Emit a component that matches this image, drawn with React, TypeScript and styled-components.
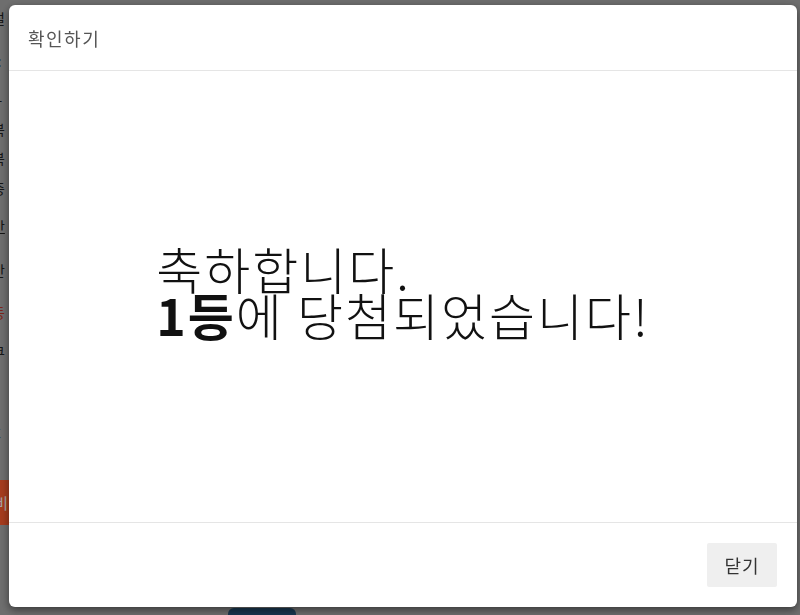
import React from 'react';
import styled, { createGlobalStyle } from 'styled-components';

const GlobalStyle = createGlobalStyle`
  html, body {
    margin: 0;
    padding: 0;
    width: 800px;
    height: 615px;
    overflow: hidden;
    background: #aaaaaa;
    font-family: "Noto Sans CJK KR", "Noto Sans", sans-serif;
  }
`;

const Page = styled.div`
  display: flex;
  flex-direction: column;
  height: 615px;
  padding-top: 2px;
  margin-left: -8px;
  box-sizing: border-box;
`;

const PageRow = styled.div<{ $h: number; $red?: boolean; $underline?: boolean }>`
  height: ${(p) => p.$h}px;
  display: flex;
  align-items: center;
  font-size: 14px;
  color: ${(p) => (p.$red ? '#c0392b' : '#222')};
  text-decoration: ${(p) => (p.$underline ? 'underline' : 'none')};
`;

const RedButton = styled.div`
  width: 80px;
  height: 45px;
  margin-top: 30px;
  margin-left: -64px;
  background: #ff5c2e;
  color: #fff;
  display: flex;
  align-items: center;
  justify-content: flex-end;
  padding-right: 4px;
  font-size: 15px;
`;

const BottomBar = styled.div`
  margin-top: auto;
  display: flex;
  padding-left: 236px;
  height: 7px;
`;

const BlueButton = styled.div`
  width: 68px;
  height: 20px;
  background: #26557b;
  border-radius: 6px 6px 0 0;
`;

const Backdrop = styled.div`
  position: fixed;
  inset: 0;
  background: rgba(0, 0, 0, 0.35);
  display: flex;
  align-items: flex-start;
  padding: 5px 0 0 9px;
`;

const Modal = styled.div`
  width: 788px;
  height: 602px;
  background: #fff;
  border-radius: 6px;
  box-shadow: 0 3px 9px rgba(0, 0, 0, 0.5);
  display: flex;
  flex-direction: column;
  overflow: hidden;
`;

const Header = styled.div`
  height: 66px;
  box-sizing: border-box;
  border-bottom: 1px solid #e5e5e5;
  display: flex;
  align-items: center;
  padding: 0 19px;
`;

const Title = styled.h4`
  margin: 0;
  font-size: 18px;
  font-weight: 400;
  color: #555;
  letter-spacing: 1.5px;
`;

const Body = styled.div`
  flex: 1;
  display: flex;
  align-items: center;
  justify-content: center;
`;

const Message = styled.div`
  font-size: 50px;
  font-weight: 300;
  line-height: 46px;
  letter-spacing: 2px;
  color: #111;
  text-align: left;
  margin-top: -11px;
`;

const Strong = styled.b`
  font-weight: 700;
`;

const Footer = styled.div`
  height: 85px;
  box-sizing: border-box;
  border-top: 1px solid #e5e5e5;
  display: flex;
  align-items: center;
  justify-content: flex-end;
  padding: 0 20px;
`;

const CloseButton = styled.button`
  width: 70px;
  height: 44px;
  border: none;
  border-radius: 2px;
  background: #efefef;
  color: #333;
  font-family: inherit;
  font-size: 18px;
  letter-spacing: 1px;
  cursor: pointer;
`;

const App: React.FC = () => {
  return (
    <>
      <GlobalStyle />
      <Page>
        <PageRow $h={32}>설</PageRow>
        <PageRow $h={54}>/:</PageRow>
        <PageRow $h={26}>ㅏ</PageRow>
        <PageRow $h={30}>복</PageRow>
        <PageRow $h={28}>복</PageRow>
        <PageRow $h={32}>중</PageRow>
        <PageRow $h={44} $underline>간</PageRow>
        <PageRow $h={44}>간</PageRow>
        <PageRow $h={40} $red>등</PageRow>
        <PageRow $h={40}>쿠</PageRow>
        <PageRow $h={44}>-</PageRow>
        <PageRow $h={34}>C</PageRow>
        <RedButton>비</RedButton>
        <BottomBar>
          <BlueButton />
        </BottomBar>
      </Page>
      <Backdrop>
        <Modal>
          <Header>
            <Title>확인하기</Title>
          </Header>
          <Body>
            <Message>
              축하합니다.
              <br />
              <Strong>1등</Strong>에 당첨되었습니다!
            </Message>
          </Body>
          <Footer>
            <CloseButton>닫기</CloseButton>
          </Footer>
        </Modal>
      </Backdrop>
    </>
  );
};

export default App;
